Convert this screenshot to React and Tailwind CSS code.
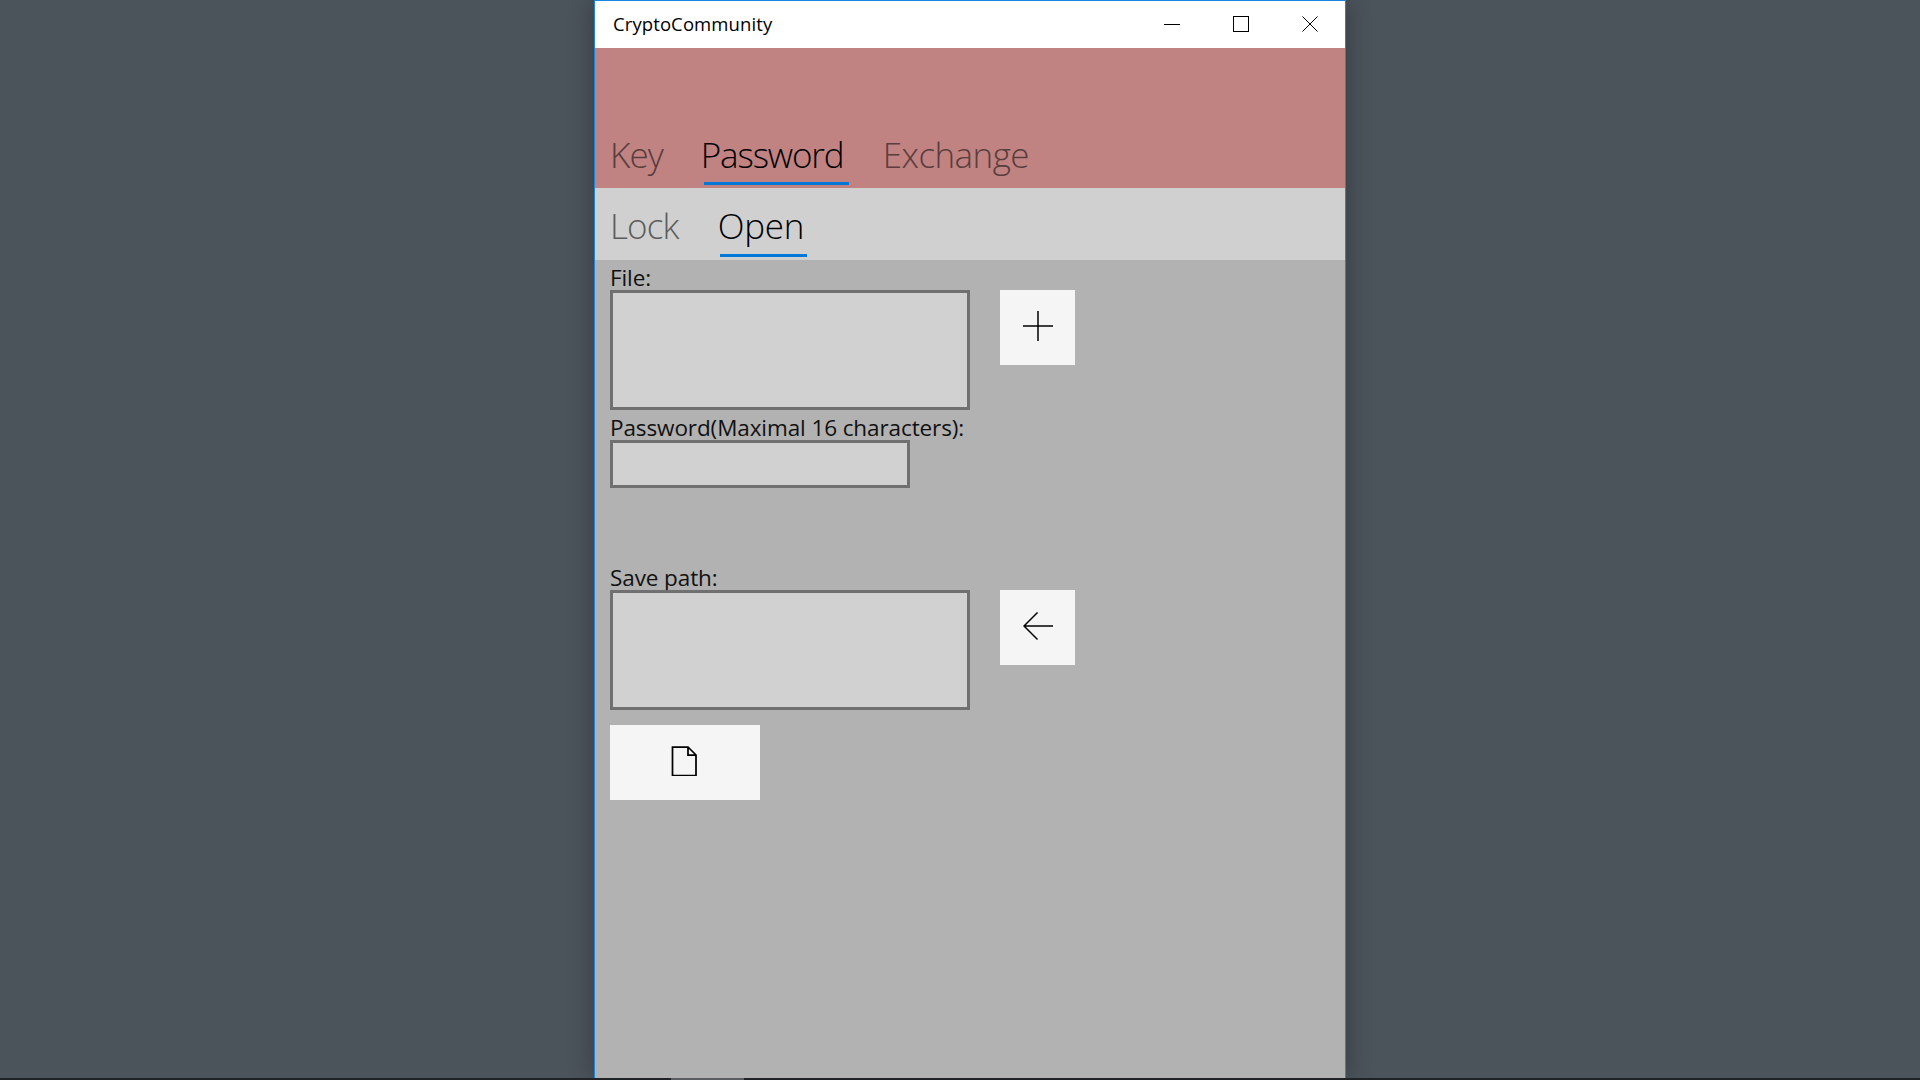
import React from 'react';

const font = { fontFamily: '"Open Sans", "Noto Sans", sans-serif' };

const tabsMain = [
  { label: 'Key', left: 'ml-[15px]', track: 'tracking-[-0.95px]', active: false },
  { label: 'Password', left: 'ml-[38px]', track: 'tracking-[-1.15px]', active: true, bar: 'w-[145px] ml-[3px]' },
  { label: 'Exchange', left: 'ml-[34px]', track: 'tracking-[-0.55px]', active: false },
];

const Tab = ({ label, left, track, active, bar, dim, lead = 'leading-[53px]' }) => (
  <div className={`flex flex-col ${left}`}>
    <div
      className={`h-[54px] text-[35px] font-light whitespace-nowrap ${lead} ${track} ${active ? 'text-black' : dim}`}
      style={font}
    >
      {label}
    </div>
    <div className={`h-[3px] ${active ? `bg-[#0078d7] ${bar}` : ''}`} />
  </div>
);

const Field = ({ className }) => (
  <div className={`border-[3px] border-[#707070] bg-[#d1d1d1] ${className}`} />
);

const Label = ({ children, className }) => (
  <div className={`text-[22.5px] leading-[35px] text-[#111] tracking-[-0.1px] whitespace-nowrap ${className}`} style={font}>
    {children}
  </div>
);

const IconButton = ({ className, children }) => (
  <button className={`bg-[#f5f5f5] flex items-center justify-center ${className}`}>{children}</button>
);

const PlusIcon = () => (
  <svg width="30" height="30" viewBox="0 0 30 30" fill="none" stroke="#000" strokeWidth="1.5">
    <path d="M0 15H30M15 0V30" />
  </svg>
);

const ArrowIcon = () => (
  <svg width="30" height="30" viewBox="0 0 30 30" fill="none" stroke="#000" strokeWidth="1.5">
    <path d="M30 15H1M14.5 1.5L1 15L14.5 28.5" />
  </svg>
);

const FileIcon = () => (
  <svg width="26" height="30" viewBox="0 0 26 30" fill="none" stroke="#000" strokeWidth="1.75">
    <path d="M1.5 1H17L25 9V29.5H1.5ZM17 1V9H25" />
  </svg>
);

export default function App() {
  return (
    <div className="w-full h-screen flex flex-col bg-[#4b535b] overflow-hidden">
      <div className="flex-1 min-h-0 flex pl-[594px]">
        <div className="w-[752px] flex flex-col border-x border-t border-[#1a86e0] bg-[#b2b2b2] shadow-[0_0_24px_rgba(0,0,0,0.3)]">
          <div className="h-[47px] bg-white flex items-center pl-[18px] pb-[2px]">
            <span className="text-[18.5px] tracking-[0.1px] text-black" style={font}>CryptoCommunity</span>
            <div className="ml-auto flex items-center">
              <svg width="16" height="16" viewBox="0 0 16 16" fill="none" stroke="#000" strokeWidth="1">
                <path d="M0 8.5H16" />
              </svg>
              <svg className="ml-[53px]" width="16" height="16" viewBox="0 0 16 16" fill="none" stroke="#000" strokeWidth="1">
                <rect x="0.5" y="0.5" width="15" height="15" />
              </svg>
              <svg className="ml-[53px] mr-[27px]" width="16" height="16" viewBox="0 0 16 16" fill="none" stroke="#000" strokeWidth="1">
                <path d="M0.5 0.5L15.5 15.5M15.5 0.5L0.5 15.5" />
              </svg>
            </div>
          </div>

          <div className="h-[140px] bg-[#c08382] flex items-end pb-[3px]">
            {tabsMain.map((t) => (
              <Tab key={t.label} {...t} dim="text-[#5a3d3d]" />
            ))}
          </div>

          <div className="h-[72px] bg-[#d0d0d0] flex items-end pb-[3px]">
            <Tab label="Lock" left="ml-[15px]" lead="leading-[52px]" track="tracking-[-0.85px]" dim="text-[#5c5c5c]" />
            <Tab label="Open" left="ml-[39px]" lead="leading-[52px]" track="tracking-[-0.25px]" active bar="w-[87px] ml-[2px]" />
          </div>

          <div className="flex-1 min-h-0 pl-[15px] flex flex-col">
            <Label className="h-[30px]">File:</Label>
            <div className="flex items-start">
              <Field className="w-[360px] h-[120px]" />
              <IconButton className="w-[75px] h-[75px] ml-[30px] pb-[3px]"><PlusIcon /></IconButton>
            </div>
            <Label className="h-[30px]">Password(Maximal 16 characters):</Label>
            <Field className="w-[300px] h-[48px]" />
            <Label className="h-[30px] mt-[72px]">Save path:</Label>
            <div className="flex items-start">
              <Field className="w-[360px] h-[120px]" />
              <IconButton className="w-[75px] h-[75px] ml-[30px] pb-[3px]"><ArrowIcon /></IconButton>
            </div>
            <IconButton className="w-[150px] h-[75px] mt-[15px] pb-[3px] pr-[2px]"><FileIcon /></IconButton>
          </div>
        </div>
      </div>
      <div className="h-[2px] bg-[#1f2326] flex">
        <div className="ml-[671px] w-[73px] bg-[#5a5d60]" />
      </div>
    </div>
  );
}
